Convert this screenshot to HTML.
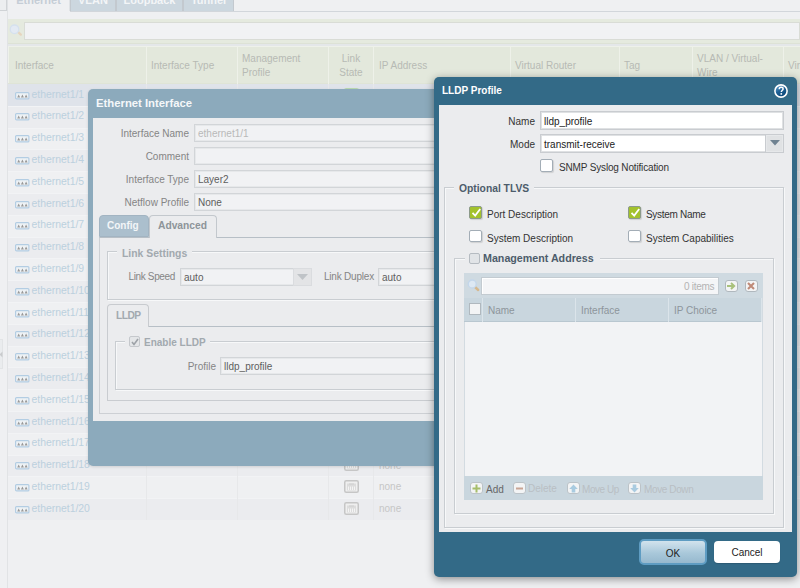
<!DOCTYPE html>
<html><head><meta charset="utf-8">
<style>
*{box-sizing:border-box;margin:0;padding:0}
html,body{width:800px;height:588px;overflow:hidden}
body{position:relative;background:#eff0f2;font-family:"Liberation Sans",sans-serif;font-size:10px;color:#333}
.a{position:absolute}
.t{position:absolute;white-space:nowrap;line-height:1}
.b{font-weight:bold}
.tab{position:absolute;top:-4px;height:15px;background:#ccd7df;border:1px solid #c3c9cf;border-bottom:none;font-weight:bold;color:#f3f5f7;font-size:11px;text-align:center;line-height:6px}
.hdt{position:absolute;white-space:nowrap;color:#b7bab4;line-height:13.5px}
.vd{position:absolute;top:46px;width:1px;height:38px;background:#eef1e9}
.row{position:absolute;left:8px;width:792px;box-shadow:inset 0 1px 0 #f2f3f5}
.eth{position:absolute;left:23.5px;color:#bcd0de;font-size:10.4px;white-space:nowrap;line-height:1}
.ico{position:absolute;left:6px;width:14px;height:8px;border:1px solid #b9d0e4;background:#e3eaf1;border-radius:1.5px}
.ico i{position:absolute;top:2px;width:3px;height:3px;background:#aaa}
.rdiv{position:absolute;top:0;width:1px;height:100%;background:#e7e8ea}
.inp{position:absolute;height:18px;background:#f1f2f4;border:1px solid #d2d5d8;box-shadow:inset 0 0 0 1px #e6e8ea}
.lbl{position:absolute;white-space:nowrap;line-height:1;color:#858585;text-align:right}
.cb{position:absolute;width:12.5px;height:12.5px;border:1.5px solid #a3adb6;background:#fff;border-radius:2px;box-shadow:1px 1px 1px rgba(0,0,0,.12)}
.cbg{background:#a3c22c;border:1px solid #8c9a8a}
.fs{position:absolute;border:1px solid #c9cdd1;box-shadow:1px 1px 0 #f7f8f9,inset 1px 1px 0 #f7f8f9}
.leg{position:absolute;background:#ebecee;padding:0 5px;font-weight:bold;color:#4d5c6b;white-space:nowrap;line-height:1}
</style></head><body>

<div class="a" style="left:0;top:-2px;width:7px;height:13px;border:1px solid #d0d3d6;border-left:none;background:#eceef0"></div>
<div class="a" style="left:7px;top:11px;width:1px;height:577px;background:#e1e3e5"></div>
<div class="a" style="left:-3px;top:339px;width:6px;height:30px;background:#eaecee;border:1px solid #e2e4e6"></div>
<svg class="a" style="left:-1px;top:351px" width="4" height="7"><path d="M3.5 0.5 L0.5 3.5 L3.5 6.5Z" fill="#c9cbcd"/></svg>
<div class="tab" style="left:7px;width:63px;background:#eff0f2;border-color:#dfe2e5;color:#c5cdd6">Ethernet</div>
<div class="tab" style="left:70px;width:46px">VLAN</div>
<div class="tab" style="left:116px;width:67px">Loopback</div>
<div class="tab" style="left:183px;width:51px">Tunnel</div>
<div class="a" style="left:70px;top:11px;width:730px;height:1px;background:#d2d6db"></div>
<div class="a" style="left:8px;top:19px;width:792px;height:25px;background:#e5eadf;border-bottom:1px solid #dde2d6"></div>
<div class="a" style="left:24px;top:22px;width:776px;height:18px;background:#f1f2f4;border:1px solid #d9dcd6"></div>
<svg class="a" style="left:9px;top:23px" width="14" height="14" viewBox="0 0 14 14"><line x1="8.5" y1="8.5" x2="11.8" y2="11.6" stroke="#e6d5bf" stroke-width="2.4" stroke-linecap="round"/><circle cx="5.5" cy="6.3" r="4.3" fill="#e3eaf3" stroke="#d5e1ee" stroke-width="1.3"/></svg>
<div class="a" style="left:8px;top:44px;width:792px;height:2px;background:#e4e7e9"></div>
<div class="a" style="left:8px;top:46px;width:792px;height:38px;background:#e3e8dc;border-bottom:1px solid #dfe4d6;box-shadow:inset 1px 1px 0 #eef1ea"></div>
<div class="vd" style="left:146px"></div>
<div class="vd" style="left:237px"></div>
<div class="vd" style="left:328px"></div>
<div class="vd" style="left:373px"></div>
<div class="vd" style="left:510px"></div>
<div class="vd" style="left:619px"></div>
<div class="vd" style="left:692px"></div>
<div class="vd" style="left:783px"></div>
<div class="hdt" style="left:15px;top:58.5px">Interface</div>
<div class="hdt" style="left:151px;top:58.5px">Interface Type</div>
<div class="hdt" style="left:242px;top:52px">Management<br>Profile</div>
<div class="hdt" style="left:329px;top:52px;width:44px;text-align:center">Link<br>State</div>
<div class="hdt" style="left:379px;top:58.5px">IP Address</div>
<div class="hdt" style="left:515px;top:58.5px">Virtual Router</div>
<div class="hdt" style="left:624px;top:58.5px">Tag</div>
<div class="hdt" style="left:697px;top:52px">VLAN / Virtual-<br>Wire</div>
<div class="hdt" style="left:788px;top:58.5px">Virtual</div>
<div class="row" style="top:84.00px;height:21.80px;background:#dfe3ea;box-shadow:none">
<div class="rdiv" style="left:138px"></div>
<div class="rdiv" style="left:229px"></div>
<div class="rdiv" style="left:320px"></div>
<div class="rdiv" style="left:365px"></div>
<svg class="a" style="left:6.5px;top:7.5px" width="15" height="8" viewBox="0 0 15 8"><rect x="0.6" y="0.6" width="13.3" height="6.3" rx="1" fill="#eef2f5" stroke="#b3cde3" stroke-width="1.2"/><path d="M2.2 5.6 L3.7 2.6 L5.2 5.6Z M5.9 5.6 L7.4 2.6 L8.9 5.6Z M9.6 5.6 L11.1 2.6 L12.6 5.6Z" fill="#999"/></svg>
<div class="eth" style="top:5.5px">ethernet1/1</div>
<svg class="a" style="left:336px;top:3.5px" width="15" height="13" viewBox="0 0 15 13"><rect x="0.75" y="0.75" width="13.5" height="11.5" rx="1.5" fill="#efefef" stroke="#b9d9b0" stroke-width="1.5"/><path d="M3 3.5 H12 V10.5 H3Z" fill="#dcdcdc"/><path d="M5 3.5 H10 V4.5 H5Z" fill="#cfcfcf"/><path d="M4.5 6.5 V10 M6.5 6.5 V10 M8.5 6.5 V10 M10.5 6.5 V10" stroke="#f4f4f4" stroke-width="1"/></svg>
<div class="t" style="left:371px;top:6px;color:#c6c6c6">none</div>
</div>
<div class="row" style="top:105.80px;height:21.80px;background:#ebecef">
<div class="rdiv" style="left:138px"></div>
<div class="rdiv" style="left:229px"></div>
<div class="rdiv" style="left:320px"></div>
<div class="rdiv" style="left:365px"></div>
<svg class="a" style="left:6.5px;top:7.5px" width="15" height="8" viewBox="0 0 15 8"><rect x="0.6" y="0.6" width="13.3" height="6.3" rx="1" fill="#eef2f5" stroke="#b3cde3" stroke-width="1.2"/><path d="M2.2 5.6 L3.7 2.6 L5.2 5.6Z M5.9 5.6 L7.4 2.6 L8.9 5.6Z M9.6 5.6 L11.1 2.6 L12.6 5.6Z" fill="#999"/></svg>
<div class="eth" style="top:5.5px">ethernet1/2</div>
<svg class="a" style="left:336px;top:3.5px" width="15" height="13" viewBox="0 0 15 13"><rect x="0.75" y="0.75" width="13.5" height="11.5" rx="1.5" fill="#efefef" stroke="#c6c6c6" stroke-width="1.5"/><path d="M3 3.5 H12 V10.5 H3Z" fill="#dcdcdc"/><path d="M5 3.5 H10 V4.5 H5Z" fill="#cfcfcf"/><path d="M4.5 6.5 V10 M6.5 6.5 V10 M8.5 6.5 V10 M10.5 6.5 V10" stroke="#f4f4f4" stroke-width="1"/></svg>
<div class="t" style="left:371px;top:6px;color:#c6c6c6">none</div>
</div>
<div class="row" style="top:127.60px;height:21.80px;background:#eff0f2">
<div class="rdiv" style="left:138px"></div>
<div class="rdiv" style="left:229px"></div>
<div class="rdiv" style="left:320px"></div>
<div class="rdiv" style="left:365px"></div>
<svg class="a" style="left:6.5px;top:7.5px" width="15" height="8" viewBox="0 0 15 8"><rect x="0.6" y="0.6" width="13.3" height="6.3" rx="1" fill="#eef2f5" stroke="#b3cde3" stroke-width="1.2"/><path d="M2.2 5.6 L3.7 2.6 L5.2 5.6Z M5.9 5.6 L7.4 2.6 L8.9 5.6Z M9.6 5.6 L11.1 2.6 L12.6 5.6Z" fill="#999"/></svg>
<div class="eth" style="top:5.5px">ethernet1/3</div>
<svg class="a" style="left:336px;top:3.5px" width="15" height="13" viewBox="0 0 15 13"><rect x="0.75" y="0.75" width="13.5" height="11.5" rx="1.5" fill="#efefef" stroke="#c6c6c6" stroke-width="1.5"/><path d="M3 3.5 H12 V10.5 H3Z" fill="#dcdcdc"/><path d="M5 3.5 H10 V4.5 H5Z" fill="#cfcfcf"/><path d="M4.5 6.5 V10 M6.5 6.5 V10 M8.5 6.5 V10 M10.5 6.5 V10" stroke="#f4f4f4" stroke-width="1"/></svg>
<div class="t" style="left:371px;top:6px;color:#c6c6c6">none</div>
</div>
<div class="row" style="top:149.40px;height:21.80px;background:#ebecef">
<div class="rdiv" style="left:138px"></div>
<div class="rdiv" style="left:229px"></div>
<div class="rdiv" style="left:320px"></div>
<div class="rdiv" style="left:365px"></div>
<svg class="a" style="left:6.5px;top:7.5px" width="15" height="8" viewBox="0 0 15 8"><rect x="0.6" y="0.6" width="13.3" height="6.3" rx="1" fill="#eef2f5" stroke="#b3cde3" stroke-width="1.2"/><path d="M2.2 5.6 L3.7 2.6 L5.2 5.6Z M5.9 5.6 L7.4 2.6 L8.9 5.6Z M9.6 5.6 L11.1 2.6 L12.6 5.6Z" fill="#999"/></svg>
<div class="eth" style="top:5.5px">ethernet1/4</div>
<svg class="a" style="left:336px;top:3.5px" width="15" height="13" viewBox="0 0 15 13"><rect x="0.75" y="0.75" width="13.5" height="11.5" rx="1.5" fill="#efefef" stroke="#c6c6c6" stroke-width="1.5"/><path d="M3 3.5 H12 V10.5 H3Z" fill="#dcdcdc"/><path d="M5 3.5 H10 V4.5 H5Z" fill="#cfcfcf"/><path d="M4.5 6.5 V10 M6.5 6.5 V10 M8.5 6.5 V10 M10.5 6.5 V10" stroke="#f4f4f4" stroke-width="1"/></svg>
<div class="t" style="left:371px;top:6px;color:#c6c6c6">none</div>
</div>
<div class="row" style="top:171.20px;height:21.80px;background:#eff0f2">
<div class="rdiv" style="left:138px"></div>
<div class="rdiv" style="left:229px"></div>
<div class="rdiv" style="left:320px"></div>
<div class="rdiv" style="left:365px"></div>
<svg class="a" style="left:6.5px;top:7.5px" width="15" height="8" viewBox="0 0 15 8"><rect x="0.6" y="0.6" width="13.3" height="6.3" rx="1" fill="#eef2f5" stroke="#b3cde3" stroke-width="1.2"/><path d="M2.2 5.6 L3.7 2.6 L5.2 5.6Z M5.9 5.6 L7.4 2.6 L8.9 5.6Z M9.6 5.6 L11.1 2.6 L12.6 5.6Z" fill="#999"/></svg>
<div class="eth" style="top:5.5px">ethernet1/5</div>
<svg class="a" style="left:336px;top:3.5px" width="15" height="13" viewBox="0 0 15 13"><rect x="0.75" y="0.75" width="13.5" height="11.5" rx="1.5" fill="#efefef" stroke="#c6c6c6" stroke-width="1.5"/><path d="M3 3.5 H12 V10.5 H3Z" fill="#dcdcdc"/><path d="M5 3.5 H10 V4.5 H5Z" fill="#cfcfcf"/><path d="M4.5 6.5 V10 M6.5 6.5 V10 M8.5 6.5 V10 M10.5 6.5 V10" stroke="#f4f4f4" stroke-width="1"/></svg>
<div class="t" style="left:371px;top:6px;color:#c6c6c6">none</div>
</div>
<div class="row" style="top:193.00px;height:21.80px;background:#ebecef">
<div class="rdiv" style="left:138px"></div>
<div class="rdiv" style="left:229px"></div>
<div class="rdiv" style="left:320px"></div>
<div class="rdiv" style="left:365px"></div>
<svg class="a" style="left:6.5px;top:7.5px" width="15" height="8" viewBox="0 0 15 8"><rect x="0.6" y="0.6" width="13.3" height="6.3" rx="1" fill="#eef2f5" stroke="#b3cde3" stroke-width="1.2"/><path d="M2.2 5.6 L3.7 2.6 L5.2 5.6Z M5.9 5.6 L7.4 2.6 L8.9 5.6Z M9.6 5.6 L11.1 2.6 L12.6 5.6Z" fill="#999"/></svg>
<div class="eth" style="top:5.5px">ethernet1/6</div>
<svg class="a" style="left:336px;top:3.5px" width="15" height="13" viewBox="0 0 15 13"><rect x="0.75" y="0.75" width="13.5" height="11.5" rx="1.5" fill="#efefef" stroke="#c6c6c6" stroke-width="1.5"/><path d="M3 3.5 H12 V10.5 H3Z" fill="#dcdcdc"/><path d="M5 3.5 H10 V4.5 H5Z" fill="#cfcfcf"/><path d="M4.5 6.5 V10 M6.5 6.5 V10 M8.5 6.5 V10 M10.5 6.5 V10" stroke="#f4f4f4" stroke-width="1"/></svg>
<div class="t" style="left:371px;top:6px;color:#c6c6c6">none</div>
</div>
<div class="row" style="top:214.80px;height:21.80px;background:#eff0f2">
<div class="rdiv" style="left:138px"></div>
<div class="rdiv" style="left:229px"></div>
<div class="rdiv" style="left:320px"></div>
<div class="rdiv" style="left:365px"></div>
<svg class="a" style="left:6.5px;top:7.5px" width="15" height="8" viewBox="0 0 15 8"><rect x="0.6" y="0.6" width="13.3" height="6.3" rx="1" fill="#eef2f5" stroke="#b3cde3" stroke-width="1.2"/><path d="M2.2 5.6 L3.7 2.6 L5.2 5.6Z M5.9 5.6 L7.4 2.6 L8.9 5.6Z M9.6 5.6 L11.1 2.6 L12.6 5.6Z" fill="#999"/></svg>
<div class="eth" style="top:5.5px">ethernet1/7</div>
<svg class="a" style="left:336px;top:3.5px" width="15" height="13" viewBox="0 0 15 13"><rect x="0.75" y="0.75" width="13.5" height="11.5" rx="1.5" fill="#efefef" stroke="#c6c6c6" stroke-width="1.5"/><path d="M3 3.5 H12 V10.5 H3Z" fill="#dcdcdc"/><path d="M5 3.5 H10 V4.5 H5Z" fill="#cfcfcf"/><path d="M4.5 6.5 V10 M6.5 6.5 V10 M8.5 6.5 V10 M10.5 6.5 V10" stroke="#f4f4f4" stroke-width="1"/></svg>
<div class="t" style="left:371px;top:6px;color:#c6c6c6">none</div>
</div>
<div class="row" style="top:236.60px;height:21.80px;background:#ebecef">
<div class="rdiv" style="left:138px"></div>
<div class="rdiv" style="left:229px"></div>
<div class="rdiv" style="left:320px"></div>
<div class="rdiv" style="left:365px"></div>
<svg class="a" style="left:6.5px;top:7.5px" width="15" height="8" viewBox="0 0 15 8"><rect x="0.6" y="0.6" width="13.3" height="6.3" rx="1" fill="#eef2f5" stroke="#b3cde3" stroke-width="1.2"/><path d="M2.2 5.6 L3.7 2.6 L5.2 5.6Z M5.9 5.6 L7.4 2.6 L8.9 5.6Z M9.6 5.6 L11.1 2.6 L12.6 5.6Z" fill="#999"/></svg>
<div class="eth" style="top:5.5px">ethernet1/8</div>
<svg class="a" style="left:336px;top:3.5px" width="15" height="13" viewBox="0 0 15 13"><rect x="0.75" y="0.75" width="13.5" height="11.5" rx="1.5" fill="#efefef" stroke="#c6c6c6" stroke-width="1.5"/><path d="M3 3.5 H12 V10.5 H3Z" fill="#dcdcdc"/><path d="M5 3.5 H10 V4.5 H5Z" fill="#cfcfcf"/><path d="M4.5 6.5 V10 M6.5 6.5 V10 M8.5 6.5 V10 M10.5 6.5 V10" stroke="#f4f4f4" stroke-width="1"/></svg>
<div class="t" style="left:371px;top:6px;color:#c6c6c6">none</div>
</div>
<div class="row" style="top:258.40px;height:21.80px;background:#eff0f2">
<div class="rdiv" style="left:138px"></div>
<div class="rdiv" style="left:229px"></div>
<div class="rdiv" style="left:320px"></div>
<div class="rdiv" style="left:365px"></div>
<svg class="a" style="left:6.5px;top:7.5px" width="15" height="8" viewBox="0 0 15 8"><rect x="0.6" y="0.6" width="13.3" height="6.3" rx="1" fill="#eef2f5" stroke="#b3cde3" stroke-width="1.2"/><path d="M2.2 5.6 L3.7 2.6 L5.2 5.6Z M5.9 5.6 L7.4 2.6 L8.9 5.6Z M9.6 5.6 L11.1 2.6 L12.6 5.6Z" fill="#999"/></svg>
<div class="eth" style="top:5.5px">ethernet1/9</div>
<svg class="a" style="left:336px;top:3.5px" width="15" height="13" viewBox="0 0 15 13"><rect x="0.75" y="0.75" width="13.5" height="11.5" rx="1.5" fill="#efefef" stroke="#c6c6c6" stroke-width="1.5"/><path d="M3 3.5 H12 V10.5 H3Z" fill="#dcdcdc"/><path d="M5 3.5 H10 V4.5 H5Z" fill="#cfcfcf"/><path d="M4.5 6.5 V10 M6.5 6.5 V10 M8.5 6.5 V10 M10.5 6.5 V10" stroke="#f4f4f4" stroke-width="1"/></svg>
<div class="t" style="left:371px;top:6px;color:#c6c6c6">none</div>
</div>
<div class="row" style="top:280.20px;height:21.80px;background:#ebecef">
<div class="rdiv" style="left:138px"></div>
<div class="rdiv" style="left:229px"></div>
<div class="rdiv" style="left:320px"></div>
<div class="rdiv" style="left:365px"></div>
<svg class="a" style="left:6.5px;top:7.5px" width="15" height="8" viewBox="0 0 15 8"><rect x="0.6" y="0.6" width="13.3" height="6.3" rx="1" fill="#eef2f5" stroke="#b3cde3" stroke-width="1.2"/><path d="M2.2 5.6 L3.7 2.6 L5.2 5.6Z M5.9 5.6 L7.4 2.6 L8.9 5.6Z M9.6 5.6 L11.1 2.6 L12.6 5.6Z" fill="#999"/></svg>
<div class="eth" style="top:5.5px">ethernet1/10</div>
<svg class="a" style="left:336px;top:3.5px" width="15" height="13" viewBox="0 0 15 13"><rect x="0.75" y="0.75" width="13.5" height="11.5" rx="1.5" fill="#efefef" stroke="#c6c6c6" stroke-width="1.5"/><path d="M3 3.5 H12 V10.5 H3Z" fill="#dcdcdc"/><path d="M5 3.5 H10 V4.5 H5Z" fill="#cfcfcf"/><path d="M4.5 6.5 V10 M6.5 6.5 V10 M8.5 6.5 V10 M10.5 6.5 V10" stroke="#f4f4f4" stroke-width="1"/></svg>
<div class="t" style="left:371px;top:6px;color:#c6c6c6">none</div>
</div>
<div class="row" style="top:302.00px;height:21.80px;background:#eff0f2">
<div class="rdiv" style="left:138px"></div>
<div class="rdiv" style="left:229px"></div>
<div class="rdiv" style="left:320px"></div>
<div class="rdiv" style="left:365px"></div>
<svg class="a" style="left:6.5px;top:7.5px" width="15" height="8" viewBox="0 0 15 8"><rect x="0.6" y="0.6" width="13.3" height="6.3" rx="1" fill="#eef2f5" stroke="#b3cde3" stroke-width="1.2"/><path d="M2.2 5.6 L3.7 2.6 L5.2 5.6Z M5.9 5.6 L7.4 2.6 L8.9 5.6Z M9.6 5.6 L11.1 2.6 L12.6 5.6Z" fill="#999"/></svg>
<div class="eth" style="top:5.5px">ethernet1/11</div>
<svg class="a" style="left:336px;top:3.5px" width="15" height="13" viewBox="0 0 15 13"><rect x="0.75" y="0.75" width="13.5" height="11.5" rx="1.5" fill="#efefef" stroke="#c6c6c6" stroke-width="1.5"/><path d="M3 3.5 H12 V10.5 H3Z" fill="#dcdcdc"/><path d="M5 3.5 H10 V4.5 H5Z" fill="#cfcfcf"/><path d="M4.5 6.5 V10 M6.5 6.5 V10 M8.5 6.5 V10 M10.5 6.5 V10" stroke="#f4f4f4" stroke-width="1"/></svg>
<div class="t" style="left:371px;top:6px;color:#c6c6c6">none</div>
</div>
<div class="row" style="top:323.80px;height:21.80px;background:#ebecef">
<div class="rdiv" style="left:138px"></div>
<div class="rdiv" style="left:229px"></div>
<div class="rdiv" style="left:320px"></div>
<div class="rdiv" style="left:365px"></div>
<svg class="a" style="left:6.5px;top:7.5px" width="15" height="8" viewBox="0 0 15 8"><rect x="0.6" y="0.6" width="13.3" height="6.3" rx="1" fill="#eef2f5" stroke="#b3cde3" stroke-width="1.2"/><path d="M2.2 5.6 L3.7 2.6 L5.2 5.6Z M5.9 5.6 L7.4 2.6 L8.9 5.6Z M9.6 5.6 L11.1 2.6 L12.6 5.6Z" fill="#999"/></svg>
<div class="eth" style="top:5.5px">ethernet1/12</div>
<svg class="a" style="left:336px;top:3.5px" width="15" height="13" viewBox="0 0 15 13"><rect x="0.75" y="0.75" width="13.5" height="11.5" rx="1.5" fill="#efefef" stroke="#c6c6c6" stroke-width="1.5"/><path d="M3 3.5 H12 V10.5 H3Z" fill="#dcdcdc"/><path d="M5 3.5 H10 V4.5 H5Z" fill="#cfcfcf"/><path d="M4.5 6.5 V10 M6.5 6.5 V10 M8.5 6.5 V10 M10.5 6.5 V10" stroke="#f4f4f4" stroke-width="1"/></svg>
<div class="t" style="left:371px;top:6px;color:#c6c6c6">none</div>
</div>
<div class="row" style="top:345.60px;height:21.80px;background:#eff0f2">
<div class="rdiv" style="left:138px"></div>
<div class="rdiv" style="left:229px"></div>
<div class="rdiv" style="left:320px"></div>
<div class="rdiv" style="left:365px"></div>
<svg class="a" style="left:6.5px;top:7.5px" width="15" height="8" viewBox="0 0 15 8"><rect x="0.6" y="0.6" width="13.3" height="6.3" rx="1" fill="#eef2f5" stroke="#b3cde3" stroke-width="1.2"/><path d="M2.2 5.6 L3.7 2.6 L5.2 5.6Z M5.9 5.6 L7.4 2.6 L8.9 5.6Z M9.6 5.6 L11.1 2.6 L12.6 5.6Z" fill="#999"/></svg>
<div class="eth" style="top:5.5px">ethernet1/13</div>
<svg class="a" style="left:336px;top:3.5px" width="15" height="13" viewBox="0 0 15 13"><rect x="0.75" y="0.75" width="13.5" height="11.5" rx="1.5" fill="#efefef" stroke="#c6c6c6" stroke-width="1.5"/><path d="M3 3.5 H12 V10.5 H3Z" fill="#dcdcdc"/><path d="M5 3.5 H10 V4.5 H5Z" fill="#cfcfcf"/><path d="M4.5 6.5 V10 M6.5 6.5 V10 M8.5 6.5 V10 M10.5 6.5 V10" stroke="#f4f4f4" stroke-width="1"/></svg>
<div class="t" style="left:371px;top:6px;color:#c6c6c6">none</div>
</div>
<div class="row" style="top:367.40px;height:21.80px;background:#ebecef">
<div class="rdiv" style="left:138px"></div>
<div class="rdiv" style="left:229px"></div>
<div class="rdiv" style="left:320px"></div>
<div class="rdiv" style="left:365px"></div>
<svg class="a" style="left:6.5px;top:7.5px" width="15" height="8" viewBox="0 0 15 8"><rect x="0.6" y="0.6" width="13.3" height="6.3" rx="1" fill="#eef2f5" stroke="#b3cde3" stroke-width="1.2"/><path d="M2.2 5.6 L3.7 2.6 L5.2 5.6Z M5.9 5.6 L7.4 2.6 L8.9 5.6Z M9.6 5.6 L11.1 2.6 L12.6 5.6Z" fill="#999"/></svg>
<div class="eth" style="top:5.5px">ethernet1/14</div>
<svg class="a" style="left:336px;top:3.5px" width="15" height="13" viewBox="0 0 15 13"><rect x="0.75" y="0.75" width="13.5" height="11.5" rx="1.5" fill="#efefef" stroke="#c6c6c6" stroke-width="1.5"/><path d="M3 3.5 H12 V10.5 H3Z" fill="#dcdcdc"/><path d="M5 3.5 H10 V4.5 H5Z" fill="#cfcfcf"/><path d="M4.5 6.5 V10 M6.5 6.5 V10 M8.5 6.5 V10 M10.5 6.5 V10" stroke="#f4f4f4" stroke-width="1"/></svg>
<div class="t" style="left:371px;top:6px;color:#c6c6c6">none</div>
</div>
<div class="row" style="top:389.20px;height:21.80px;background:#eff0f2">
<div class="rdiv" style="left:138px"></div>
<div class="rdiv" style="left:229px"></div>
<div class="rdiv" style="left:320px"></div>
<div class="rdiv" style="left:365px"></div>
<svg class="a" style="left:6.5px;top:7.5px" width="15" height="8" viewBox="0 0 15 8"><rect x="0.6" y="0.6" width="13.3" height="6.3" rx="1" fill="#eef2f5" stroke="#b3cde3" stroke-width="1.2"/><path d="M2.2 5.6 L3.7 2.6 L5.2 5.6Z M5.9 5.6 L7.4 2.6 L8.9 5.6Z M9.6 5.6 L11.1 2.6 L12.6 5.6Z" fill="#999"/></svg>
<div class="eth" style="top:5.5px">ethernet1/15</div>
<svg class="a" style="left:336px;top:3.5px" width="15" height="13" viewBox="0 0 15 13"><rect x="0.75" y="0.75" width="13.5" height="11.5" rx="1.5" fill="#efefef" stroke="#c6c6c6" stroke-width="1.5"/><path d="M3 3.5 H12 V10.5 H3Z" fill="#dcdcdc"/><path d="M5 3.5 H10 V4.5 H5Z" fill="#cfcfcf"/><path d="M4.5 6.5 V10 M6.5 6.5 V10 M8.5 6.5 V10 M10.5 6.5 V10" stroke="#f4f4f4" stroke-width="1"/></svg>
<div class="t" style="left:371px;top:6px;color:#c6c6c6">none</div>
</div>
<div class="row" style="top:411.00px;height:21.80px;background:#ebecef">
<div class="rdiv" style="left:138px"></div>
<div class="rdiv" style="left:229px"></div>
<div class="rdiv" style="left:320px"></div>
<div class="rdiv" style="left:365px"></div>
<svg class="a" style="left:6.5px;top:7.5px" width="15" height="8" viewBox="0 0 15 8"><rect x="0.6" y="0.6" width="13.3" height="6.3" rx="1" fill="#eef2f5" stroke="#b3cde3" stroke-width="1.2"/><path d="M2.2 5.6 L3.7 2.6 L5.2 5.6Z M5.9 5.6 L7.4 2.6 L8.9 5.6Z M9.6 5.6 L11.1 2.6 L12.6 5.6Z" fill="#999"/></svg>
<div class="eth" style="top:5.5px">ethernet1/16</div>
<svg class="a" style="left:336px;top:3.5px" width="15" height="13" viewBox="0 0 15 13"><rect x="0.75" y="0.75" width="13.5" height="11.5" rx="1.5" fill="#efefef" stroke="#c6c6c6" stroke-width="1.5"/><path d="M3 3.5 H12 V10.5 H3Z" fill="#dcdcdc"/><path d="M5 3.5 H10 V4.5 H5Z" fill="#cfcfcf"/><path d="M4.5 6.5 V10 M6.5 6.5 V10 M8.5 6.5 V10 M10.5 6.5 V10" stroke="#f4f4f4" stroke-width="1"/></svg>
<div class="t" style="left:371px;top:6px;color:#c6c6c6">none</div>
</div>
<div class="row" style="top:432.80px;height:21.80px;background:#eff0f2">
<div class="rdiv" style="left:138px"></div>
<div class="rdiv" style="left:229px"></div>
<div class="rdiv" style="left:320px"></div>
<div class="rdiv" style="left:365px"></div>
<svg class="a" style="left:6.5px;top:7.5px" width="15" height="8" viewBox="0 0 15 8"><rect x="0.6" y="0.6" width="13.3" height="6.3" rx="1" fill="#eef2f5" stroke="#b3cde3" stroke-width="1.2"/><path d="M2.2 5.6 L3.7 2.6 L5.2 5.6Z M5.9 5.6 L7.4 2.6 L8.9 5.6Z M9.6 5.6 L11.1 2.6 L12.6 5.6Z" fill="#999"/></svg>
<div class="eth" style="top:5.5px">ethernet1/17</div>
<svg class="a" style="left:336px;top:3.5px" width="15" height="13" viewBox="0 0 15 13"><rect x="0.75" y="0.75" width="13.5" height="11.5" rx="1.5" fill="#efefef" stroke="#c6c6c6" stroke-width="1.5"/><path d="M3 3.5 H12 V10.5 H3Z" fill="#dcdcdc"/><path d="M5 3.5 H10 V4.5 H5Z" fill="#cfcfcf"/><path d="M4.5 6.5 V10 M6.5 6.5 V10 M8.5 6.5 V10 M10.5 6.5 V10" stroke="#f4f4f4" stroke-width="1"/></svg>
<div class="t" style="left:371px;top:6px;color:#c6c6c6">none</div>
</div>
<div class="row" style="top:454.60px;height:21.80px;background:#ebecef">
<div class="rdiv" style="left:138px"></div>
<div class="rdiv" style="left:229px"></div>
<div class="rdiv" style="left:320px"></div>
<div class="rdiv" style="left:365px"></div>
<svg class="a" style="left:6.5px;top:7.5px" width="15" height="8" viewBox="0 0 15 8"><rect x="0.6" y="0.6" width="13.3" height="6.3" rx="1" fill="#eef2f5" stroke="#b3cde3" stroke-width="1.2"/><path d="M2.2 5.6 L3.7 2.6 L5.2 5.6Z M5.9 5.6 L7.4 2.6 L8.9 5.6Z M9.6 5.6 L11.1 2.6 L12.6 5.6Z" fill="#999"/></svg>
<div class="eth" style="top:5.5px">ethernet1/18</div>
<svg class="a" style="left:336px;top:3.5px" width="15" height="13" viewBox="0 0 15 13"><rect x="0.75" y="0.75" width="13.5" height="11.5" rx="1.5" fill="#efefef" stroke="#c6c6c6" stroke-width="1.5"/><path d="M3 3.5 H12 V10.5 H3Z" fill="#dcdcdc"/><path d="M5 3.5 H10 V4.5 H5Z" fill="#cfcfcf"/><path d="M4.5 6.5 V10 M6.5 6.5 V10 M8.5 6.5 V10 M10.5 6.5 V10" stroke="#f4f4f4" stroke-width="1"/></svg>
<div class="t" style="left:371px;top:6px;color:#c6c6c6">none</div>
</div>
<div class="row" style="top:476.40px;height:21.80px;background:#eff0f2">
<div class="rdiv" style="left:138px"></div>
<div class="rdiv" style="left:229px"></div>
<div class="rdiv" style="left:320px"></div>
<div class="rdiv" style="left:365px"></div>
<svg class="a" style="left:6.5px;top:7.5px" width="15" height="8" viewBox="0 0 15 8"><rect x="0.6" y="0.6" width="13.3" height="6.3" rx="1" fill="#eef2f5" stroke="#b3cde3" stroke-width="1.2"/><path d="M2.2 5.6 L3.7 2.6 L5.2 5.6Z M5.9 5.6 L7.4 2.6 L8.9 5.6Z M9.6 5.6 L11.1 2.6 L12.6 5.6Z" fill="#999"/></svg>
<div class="eth" style="top:5.5px">ethernet1/19</div>
<svg class="a" style="left:336px;top:3.5px" width="15" height="13" viewBox="0 0 15 13"><rect x="0.75" y="0.75" width="13.5" height="11.5" rx="1.5" fill="#efefef" stroke="#c6c6c6" stroke-width="1.5"/><path d="M3 3.5 H12 V10.5 H3Z" fill="#dcdcdc"/><path d="M5 3.5 H10 V4.5 H5Z" fill="#cfcfcf"/><path d="M4.5 6.5 V10 M6.5 6.5 V10 M8.5 6.5 V10 M10.5 6.5 V10" stroke="#f4f4f4" stroke-width="1"/></svg>
<div class="t" style="left:371px;top:6px;color:#c6c6c6">none</div>
</div>
<div class="row" style="top:498.20px;height:21.80px;background:#ebecef">
<div class="rdiv" style="left:138px"></div>
<div class="rdiv" style="left:229px"></div>
<div class="rdiv" style="left:320px"></div>
<div class="rdiv" style="left:365px"></div>
<svg class="a" style="left:6.5px;top:7.5px" width="15" height="8" viewBox="0 0 15 8"><rect x="0.6" y="0.6" width="13.3" height="6.3" rx="1" fill="#eef2f5" stroke="#b3cde3" stroke-width="1.2"/><path d="M2.2 5.6 L3.7 2.6 L5.2 5.6Z M5.9 5.6 L7.4 2.6 L8.9 5.6Z M9.6 5.6 L11.1 2.6 L12.6 5.6Z" fill="#999"/></svg>
<div class="eth" style="top:5.5px">ethernet1/20</div>
<svg class="a" style="left:336px;top:3.5px" width="15" height="13" viewBox="0 0 15 13"><rect x="0.75" y="0.75" width="13.5" height="11.5" rx="1.5" fill="#efefef" stroke="#c6c6c6" stroke-width="1.5"/><path d="M3 3.5 H12 V10.5 H3Z" fill="#dcdcdc"/><path d="M5 3.5 H10 V4.5 H5Z" fill="#cfcfcf"/><path d="M4.5 6.5 V10 M6.5 6.5 V10 M8.5 6.5 V10 M10.5 6.5 V10" stroke="#f4f4f4" stroke-width="1"/></svg>
<div class="t" style="left:371px;top:6px;color:#c6c6c6">none</div>
</div>
<div class="a" style="left:88px;top:89px;width:370px;height:376.5px;background:#8caabc;border-radius:5px;box-shadow:0 1px 3px rgba(0,0,0,.12)"></div>
<div class="t b" style="left:96px;top:98px;color:#f4f7f9;font-size:11.3px">Ethernet Interface</div>
<div class="a" style="left:93px;top:118px;width:360px;height:303px;background:#ebecee"></div>
<div class="lbl" style="left:100px;width:89px;top:128.5px">Interface Name</div>
<div class="inp" style="left:194px;top:124px;width:260px"></div>
<div class="t" style="left:198px;top:129px;color:#b9b9b9">ethernet1/1</div>
<div class="lbl" style="left:100px;width:89px;top:151.5px">Comment</div>
<div class="inp" style="left:194px;top:147px;width:260px"></div>
<div class="lbl" style="left:100px;width:89px;top:174.5px">Interface Type</div>
<div class="inp" style="left:194px;top:170px;width:260px"></div>
<div class="t" style="left:198px;top:175px;color:#5e5e5e">Layer2</div>
<div class="lbl" style="left:100px;width:89px;top:197.5px">Netflow Profile</div>
<div class="inp" style="left:194px;top:193px;width:260px"></div>
<div class="t" style="left:198px;top:198px;color:#5e5e5e">None</div>
<div class="a" style="left:99px;top:237px;width:360px;height:177px;border:1px solid #cdd0d4;border-top-color:#b7bfc6;border-right:none"></div>
<div class="a" style="left:99px;top:215px;width:50px;height:22px;background:#abbfcd;border-radius:4px 4px 0 0;border:1px solid #a2b4c2"></div>
<div class="t b" style="left:107px;top:221px;color:#f3f6f8;font-size:10px">Config</div>
<div class="a" style="left:149px;top:215px;width:68px;height:23px;background:#ebecee;border-radius:4px 4px 0 0;border:1px solid #c3c8cd;border-bottom:none"></div>
<div class="t b" style="left:158px;top:221px;color:#8d9499;font-size:10.25px">Advanced</div>
<div class="fs" style="left:107px;top:251px;width:360px;height:49px;border-right:none"></div>
<div class="leg" style="left:117px;top:248.5px;color:#a2a9af;font-size:10.4px">Link Settings</div>
<div class="lbl" style="left:110px;width:65px;top:272px;letter-spacing:-0.35px">Link Speed</div>
<div class="inp" style="left:180px;top:268px;width:132px"></div>
<div class="a" style="left:293px;top:268px;width:19px;height:18px;background:#e3e4e6;border:1px solid #dadcdf"></div>
<svg class="a" style="left:297px;top:274px" width="11" height="6"><path d="M0 0 H11 L5.5 6Z" fill="#bfc3c7"/></svg>
<div class="t" style="left:184px;top:273px;color:#5e5e5e">auto</div>
<div class="lbl" style="left:300px;width:74px;top:272px;letter-spacing:-0.2px">Link Duplex</div>
<div class="inp" style="left:378px;top:268px;width:80px"></div>
<div class="t" style="left:382px;top:273px;color:#5e5e5e">auto</div>
<div class="a" style="left:107px;top:326px;width:360px;height:75px;border:1px solid #c9ccd0;border-top-color:#b7bfc6;border-right:none"></div>
<div class="a" style="left:107px;top:304px;width:42px;height:23px;background:#ebecee;border-radius:4px 4px 0 0;border:1px solid #c8cbcf;border-bottom:none"></div>
<div class="t b" style="left:116px;top:311px;color:#a2a9af;font-size:10.2px;letter-spacing:-0.5px">LLDP</div>
<div class="fs" style="left:115px;top:341px;width:360px;height:49px;border-right:none"></div>
<div class="a" style="left:125px;top:333px;width:85px;height:14px;background:#ebecee"></div>
<div class="a" style="left:129px;top:336px;width:11px;height:11px;border:1px solid #c5c8cc;background:#e4e6e8;border-radius:2px"></div>
<svg class="a" style="left:131px;top:338px" width="8" height="8"><path d="M1 4 L3 6.5 L7 1" stroke="#9da2a7" stroke-width="1.6" fill="none"/></svg>
<div class="t b" style="left:144px;top:338px;color:#a2a9af;font-size:10px">Enable LLDP</div>
<div class="lbl" style="left:170px;width:46px;top:362px">Profile</div>
<div class="inp" style="left:220px;top:357px;width:240px"></div>
<div class="t" style="left:224px;top:362px;color:#5e5e5e">lldp_profile</div>
<div class="a" style="left:434px;top:77px;width:363px;height:500px;background:#336a87;border-radius:5px;box-shadow:0 2px 8px rgba(0,0,0,.42)"></div>
<div class="t b" style="left:442px;top:86px;color:#fff;font-size:10px">LLDP Profile</div>
<svg class="a" style="left:773.3px;top:82.5px" width="16" height="16" viewBox="0 0 16 16"><defs><linearGradient id="hg" x1="0.2" y1="0" x2="0.8" y2="1"><stop offset="0" stop-color="#5d9ccc"/><stop offset="0.45" stop-color="#1d5f93"/><stop offset="1" stop-color="#0b4677"/></linearGradient></defs><circle cx="8" cy="8" r="6.9" fill="#fff"/><circle cx="8" cy="8" r="5.3" fill="url(#hg)"/><path d="M6.2 6.3 C6.2 4.9 7.1 4.3 8.2 4.3 C9.3 4.3 10.1 5 10.1 5.9 C10.1 7.2 8.3 7.3 8.3 9" stroke="#fff" stroke-width="1.45" fill="none"/><rect x="7.5" y="10.1" width="1.6" height="1.6" fill="#fff"/></svg>
<div class="a" style="left:439px;top:105px;width:353px;height:427px;background:#ebecee"></div>
<div class="lbl" style="left:480px;width:55px;top:116.5px;color:#333">Name</div>
<div class="a" style="left:540px;top:111px;width:244px;height:19px;background:#fff;border:1px solid #c9ccd0;box-shadow:inset 0 0 0 1px #dfe1e3"></div>
<div class="t" style="left:544px;top:117px;color:#222">lldp_profile</div>
<div class="lbl" style="left:480px;width:55px;top:139.5px;color:#333">Mode</div>
<div class="a" style="left:540px;top:134px;width:244px;height:19px;background:#fff;border:1px solid #c9ccd0;box-shadow:inset 0 0 0 1px #dfe1e3"></div>
<div class="a" style="left:765px;top:134px;width:19px;height:19px;background:#e0e2e4;border:1px solid #c9ccd0;box-shadow:inset 0 0 0 1px #e6e8ea"></div>
<svg class="a" style="left:769.5px;top:140px" width="10" height="6"><path d="M0 0 H10 L5 5.5Z" fill="#6f8291"/></svg>
<div class="t" style="left:544px;top:140px;color:#222">transmit-receive</div>
<div class="cb" style="left:540px;top:159px"></div>
<div class="t" style="left:559px;top:163px;color:#333;letter-spacing:-0.16px">SNMP Syslog Notification</div>
<div class="fs" style="left:444px;top:187px;width:340px;height:341px"></div>
<div class="leg" style="left:454px;top:184px;font-size:10.3px">Optional TLVS</div>
<div class="cb cbg" style="left:469px;top:206px"><svg class="a" style="left:0.5px;top:0px" width="11" height="11"><path d="M1.5 5.8 L4.2 8.6 L9.2 2" stroke="#fff" stroke-width="1.8" fill="none"/></svg></div>
<div class="t" style="left:487px;top:210px">Port Description</div>
<div class="cb cbg" style="left:628px;top:206px"><svg class="a" style="left:0.5px;top:0px" width="11" height="11"><path d="M1.5 5.8 L4.2 8.6 L9.2 2" stroke="#fff" stroke-width="1.8" fill="none"/></svg></div>
<div class="t" style="left:646px;top:210px;letter-spacing:-0.3px">System Name</div>
<div class="cb" style="left:469px;top:229.5px"></div>
<div class="t" style="left:487px;top:233.5px">System Description</div>
<div class="cb" style="left:628px;top:229.5px"></div>
<div class="t" style="left:646px;top:233.5px">System Capabilities</div>
<div class="fs" style="left:454px;top:258px;width:320px;height:256px"></div>
<div class="a" style="left:465px;top:250px;width:135px;height:14px;background:#ebecee"></div>
<div class="a" style="left:469px;top:253px;width:11px;height:11px;border:1px solid #b5bbc1;background:#e1e4e7;border-radius:2px"></div>
<div class="t b" style="left:483px;top:253px;color:#4d5c6b;font-size:10.7px">Management Address</div>
<div class="a" style="left:464px;top:273px;width:299px;height:227px;background:#f2f3f5;border:1px solid #d3dbe1"></div>
<div class="a" style="left:464px;top:273px;width:299px;height:25px;background:#cfdae1"></div>
<svg class="a" style="left:467px;top:279px" width="14" height="14" viewBox="0 0 14 14"><line x1="8" y1="8" x2="11.2" y2="11" stroke="#d6b88e" stroke-width="2.4" stroke-linecap="round"/><circle cx="5.2" cy="5" r="4" fill="#dde8f3" stroke="#c3d6ea" stroke-width="1.3"/></svg>
<div class="a" style="left:481px;top:277px;width:238px;height:18px;background:#f4f5f7;border:1px solid #c3cbd1;box-shadow:inset 1px 1px 0 #fff"></div>
<div class="t" style="left:684px;top:282px;color:#b3b3b3;letter-spacing:-0.27px">0 items</div>
<div class="a" style="left:724.5px;top:279.5px;width:13px;height:12px;background:#f3f4f5;border:1.5px solid #b0b8be;border-radius:3px"></div>
<svg class="a" style="left:727px;top:282px" width="9" height="8"><path d="M0 4 H7 M4 1 L7.2 4 L4 7" stroke="#a9c17c" stroke-width="1.9" fill="none"/></svg>
<div class="a" style="left:744.5px;top:279.5px;width:13px;height:12px;background:#f3f4f5;border:1.5px solid #b0b8be;border-radius:3px"></div>
<svg class="a" style="left:747px;top:282px" width="8" height="8"><path d="M1 1 L7 7 M7 1 L1 7" stroke="#bf8a78" stroke-width="2.1" fill="none"/></svg>
<div class="a" style="left:464px;top:298px;width:298px;height:24px;background:#c9d6de;border-bottom:1px solid #b9c7d0"></div>
<div class="a" style="left:482px;top:298px;width:1px;height:24px;background:#b3c2cc;border-right:1px solid #dbe4ea"></div>
<div class="a" style="left:575px;top:298px;width:1px;height:24px;background:#b3c2cc;border-right:1px solid #dbe4ea"></div>
<div class="a" style="left:668px;top:298px;width:1px;height:24px;background:#b3c2cc;border-right:1px solid #dbe4ea"></div>
<div class="a" style="left:761px;top:298px;width:1px;height:24px;background:#b3c2cc;border-right:1px solid #dbe4ea"></div>
<div class="a" style="left:469px;top:303px;width:12px;height:12px;border:1px solid #b0b8be;background:#f3f4f5"></div>
<div class="t" style="left:488px;top:306px;color:#8d959b">Name</div>
<div class="t" style="left:581px;top:306px;color:#8d959b">Interface</div>
<div class="t" style="left:674px;top:306px;color:#8d959b">IP Choice</div>
<div class="a" style="left:464px;top:476px;width:299px;height:24px;background:#c9d6de"></div>
<div class="a" style="left:470px;top:481.5px;width:13px;height:12.5px;border:1.5px solid #bcc3c8;background:#f3f4f5;border-radius:3px"></div><svg class="a" style="left:472px;top:483.5px" width="9" height="9"><path d="M4.5 0.5 V8.5 M0.5 4.5 H8.5" stroke="#a6bd6a" stroke-width="2"/></svg>
<div class="t" style="left:486px;top:484.5px;color:#676767">Add</div>
<div class="a" style="left:513px;top:481.5px;width:13px;height:12.5px;border:1.5px solid #bcc3c8;background:#f3f4f5;border-radius:3px"></div><svg class="a" style="left:515px;top:483.5px" width="9" height="9"><path d="M1 4.5 H8" stroke="#c9a595" stroke-width="2"/></svg>
<div class="t" style="left:528px;top:484px;color:#b9bfc4">Delete</div>
<div class="a" style="left:567px;top:481.5px;width:13px;height:12.5px;border:1.5px solid #bcc3c8;background:#f3f4f5;border-radius:3px"></div><svg class="a" style="left:569px;top:483.5px" width="9" height="9"><path d="M4.5 0.5 L8.8 5 H6.3 V8.5 H2.7 V5 H0.2Z" fill="#a9cbe0"/></svg>
<div class="t" style="left:582px;top:484.5px;color:#b9bfc4;letter-spacing:-0.45px">Move Up</div>
<div class="a" style="left:628px;top:481.5px;width:13px;height:12.5px;border:1.5px solid #bcc3c8;background:#f3f4f5;border-radius:3px"></div><svg class="a" style="left:630px;top:483.5px" width="9" height="9"><path d="M4.5 8.5 L8.8 4 H6.3 V0.5 H2.7 V4 H0.2Z" fill="#a9cbe0"/></svg>
<div class="t" style="left:644px;top:484.5px;color:#b9bfc4;letter-spacing:-0.38px">Move Down</div>
<div class="a" style="left:639px;top:539px;width:68px;height:26px;border-radius:5px;border:2px solid #5e9cc2;background:linear-gradient(#d2e3ed,#a9c8da 55%,#96b9ce)"></div>
<div class="t" style="left:639px;top:548.5px;width:68px;text-align:center;color:#222">OK</div>
<div class="a" style="left:714px;top:541px;width:66px;height:21.5px;border-radius:4px;background:#fff;box-shadow:0 1px 1px rgba(0,0,0,.15)"></div>
<div class="t" style="left:714px;top:548px;width:66px;text-align:center;color:#222">Cancel</div>
</body></html>
